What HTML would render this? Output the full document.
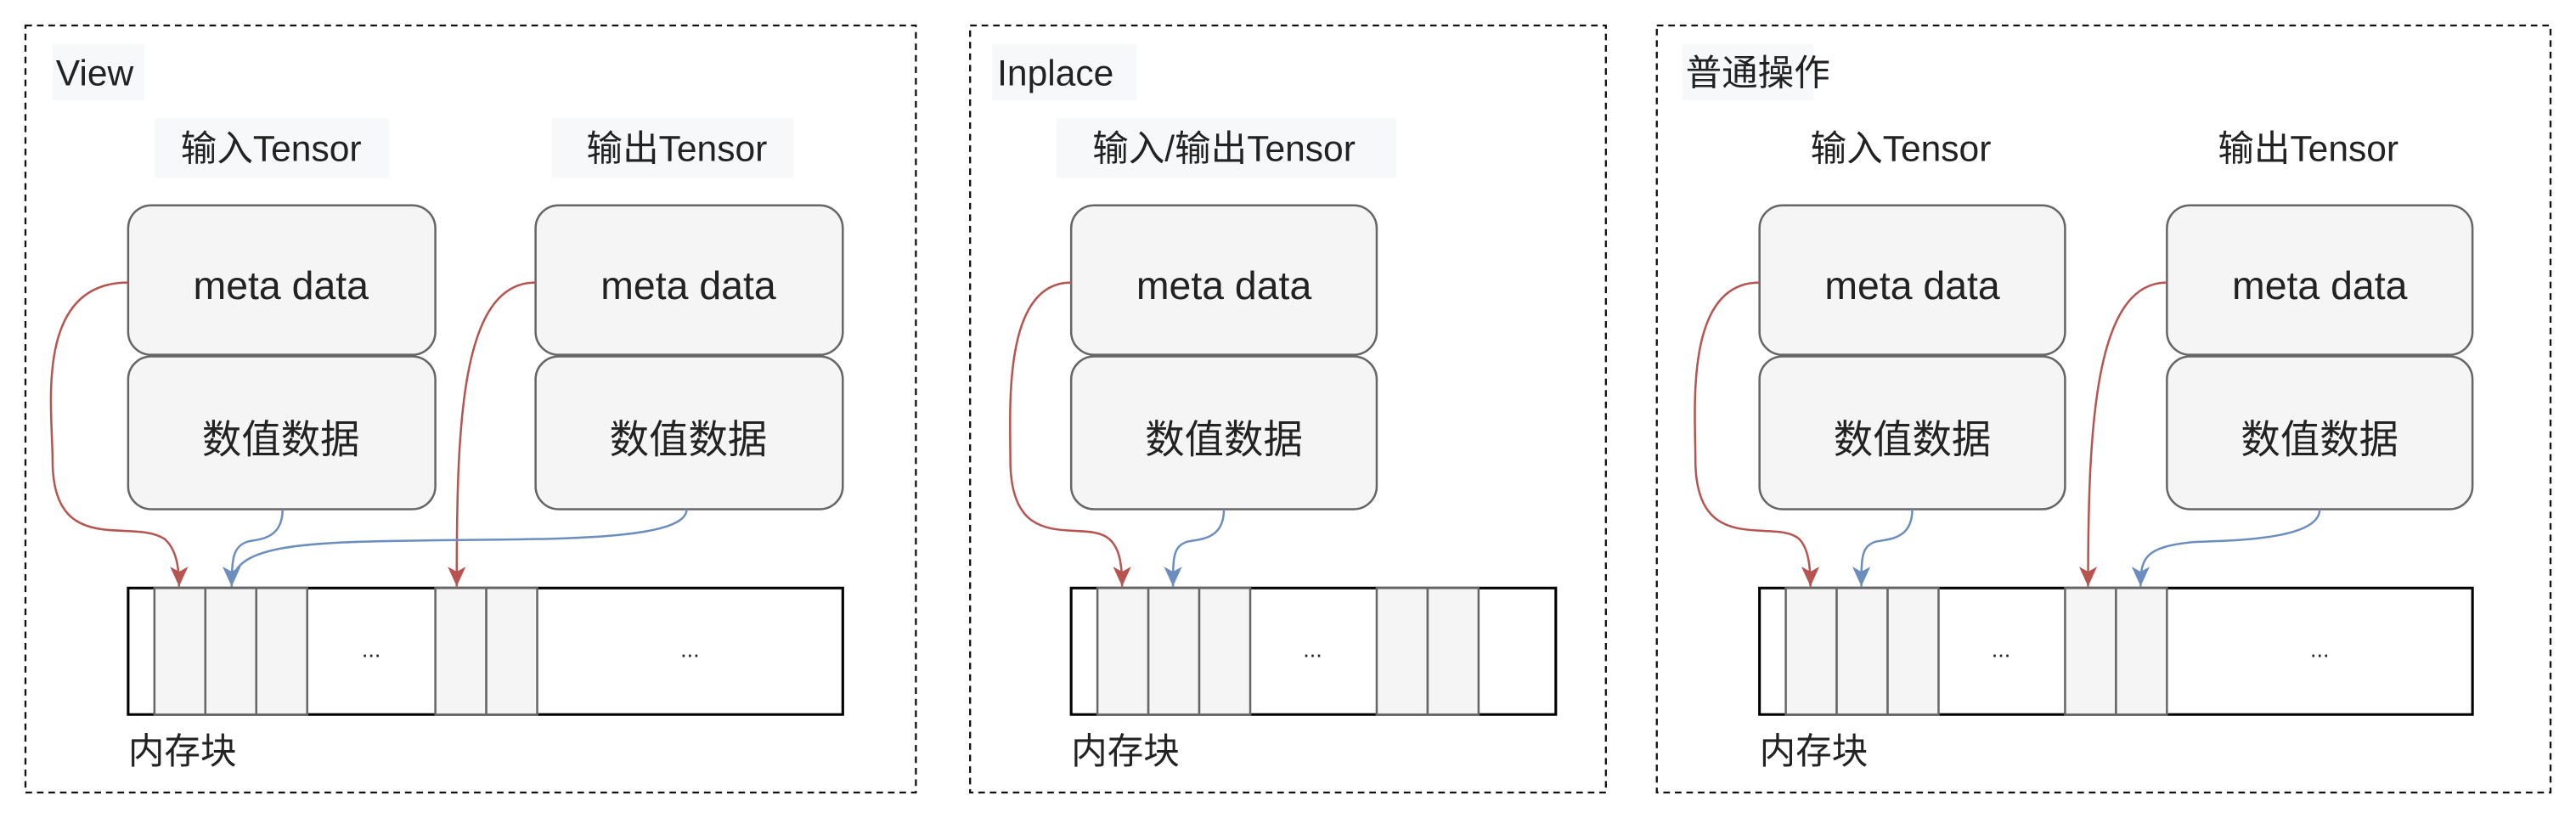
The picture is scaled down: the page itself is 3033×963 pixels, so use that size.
<!DOCTYPE html>
<html><head><meta charset="utf-8"><style>
html,body{margin:0;padding:0;background:#fff;}
svg{display:block;}
text{font-family:"Liberation Sans","Noto Sans CJK SC",sans-serif;fill:#222;}
</style></head><body>
<svg width="3033" height="963" viewBox="0 0 1568 498" preserveAspectRatio="none" xmlns="http://www.w3.org/2000/svg">
<defs>
<marker id="ar" markerWidth="13" markerHeight="11" refX="12" refY="5.5" orient="auto" markerUnits="userSpaceOnUse" viewBox="0 0 13 11"><path d="M0,0 L12,5.5 L0,11 L3,5.5 Z" fill="#b85450"/></marker>
<marker id="ab" markerWidth="13" markerHeight="11" refX="12" refY="5.5" orient="auto" markerUnits="userSpaceOnUse" viewBox="0 0 13 11"><path d="M0,0 L12,5.5 L0,11 L3,5.5 Z" fill="#6c8ebf"/></marker>
</defs>
<g fill="none" stroke="#111" stroke-width="1.2" stroke-dasharray="4,3">
<rect x="15.5" y="15.5" width="542" height="467"/>
<rect x="590.5" y="15.5" width="387" height="467"/>
<rect x="1008.5" y="15.5" width="544" height="467"/>
</g>
<g fill="#f7f8f9">
<rect x="32" y="27" width="56" height="34"/>
<rect x="94" y="72" width="143" height="36"/>
<rect x="336" y="72" width="147" height="36"/>
<rect x="604" y="27" width="88" height="34"/>
<rect x="643" y="72" width="207" height="36"/>
<rect x="1024" y="27" width="80" height="34"/>
</g>
<g font-size="22">
<text x="34" y="52">View</text>
<text x="607" y="52">Inplace</text>
<text x="1026" y="52">普通操作</text>
<text x="165" y="98" text-anchor="middle">输入Tensor</text>
<text x="412" y="98" text-anchor="middle">输出Tensor</text>
<text x="745" y="98" text-anchor="middle">输入/输出Tensor</text>
<text x="1157" y="98" text-anchor="middle">输入Tensor</text>
<text x="1405" y="98" text-anchor="middle">输出Tensor</text>
<text x="78" y="465">内存块</text>
<text x="652" y="465">内存块</text>
<text x="1071" y="465">内存块</text>
</g>
<g fill="#f5f5f5" stroke="#666" stroke-width="1.3">
<rect x="78" y="125" width="187" height="91" rx="14"/>
<rect x="78" y="217" width="187" height="93" rx="14"/>
<rect x="326" y="125" width="187" height="91" rx="14"/>
<rect x="326" y="217" width="187" height="93" rx="14"/>
<rect x="652" y="125" width="186" height="91" rx="14"/>
<rect x="652" y="217" width="186" height="93" rx="14"/>
<rect x="1071" y="125" width="186" height="91" rx="14"/>
<rect x="1071" y="217" width="186" height="93" rx="14"/>
<rect x="1319" y="125" width="186" height="91" rx="14"/>
<rect x="1319" y="217" width="186" height="93" rx="14"/>
</g>
<g font-size="24" text-anchor="middle">
<text x="171" y="182">meta data</text><text x="171" y="276">数值数据</text>
<text x="419" y="182">meta data</text><text x="419" y="276">数值数据</text>
<text x="745" y="182">meta data</text><text x="745" y="276">数值数据</text>
<text x="1164" y="182">meta data</text><text x="1164" y="276">数值数据</text>
<text x="1412" y="182">meta data</text><text x="1412" y="276">数值数据</text>
</g>
<g>
<rect x="78" y="358" width="435" height="77" fill="#fff" stroke="#000" stroke-width="1.6"/>
<g fill="#f5f5f5" stroke="#666" stroke-width="1.3">
<rect x="94" y="358" width="31" height="77"/><rect x="125" y="358" width="31" height="77"/><rect x="156" y="358" width="31" height="77"/>
<rect x="265" y="358" width="31" height="77"/><rect x="296" y="358" width="31" height="77"/>
</g>
<text x="226" y="400" font-size="14" text-anchor="middle">...</text>
<text x="420" y="400" font-size="14" text-anchor="middle">...</text>

<rect x="652" y="358" width="295" height="77" fill="#fff" stroke="#000" stroke-width="1.6"/>
<g fill="#f5f5f5" stroke="#666" stroke-width="1.3">
<rect x="668" y="358" width="31" height="77"/><rect x="699" y="358" width="31" height="77"/><rect x="730" y="358" width="31" height="77"/>
<rect x="838" y="358" width="31" height="77"/><rect x="869" y="358" width="31" height="77"/>
</g>
<text x="799" y="400" font-size="14" text-anchor="middle">...</text>

<rect x="1071" y="358" width="434" height="77" fill="#fff" stroke="#000" stroke-width="1.6"/>
<g fill="#f5f5f5" stroke="#666" stroke-width="1.3">
<rect x="1087" y="358" width="31" height="77"/><rect x="1118" y="358" width="31" height="77"/><rect x="1149" y="358" width="31" height="77"/>
<rect x="1257" y="358" width="31" height="77"/><rect x="1288" y="358" width="31" height="77"/>
</g>
<text x="1218" y="400" font-size="14" text-anchor="middle">...</text>
<text x="1412" y="400" font-size="14" text-anchor="middle">...</text>
</g>
<g fill="none" stroke-width="1.3">
<path d="M78,172 C20,172 32,250 32,280 C32,340 80,315 100,328 C106,333 109,342 109,357" stroke="#b85450" marker-end="url(#ar)"/>
<path d="M326,172 C280,172 278,260 278,357" stroke="#b85450" marker-end="url(#ar)"/>
<path d="M172,310 C172,330 155,328 150,330 C142,333 141,340 141,357" stroke="#6c8ebf" marker-end="url(#ab)"/>
<path d="M418,310 C418,330 330,328 260,329 C180,330 141,332 141,357" stroke="#6c8ebf" marker-end="url(#ab)"/>
<path d="M652,172 C610,172 615,250 615,280 C615,340 660,315 675,328 C681,333 683,342 683,357" stroke="#b85450" marker-end="url(#ar)"/>
<path d="M745,310 C745,330 728,328 722,330 C714,333 714,340 714,357" stroke="#6c8ebf" marker-end="url(#ab)"/>
<path d="M1071,172 C1025,172 1032,250 1032,280 C1032,340 1080,315 1095,328 C1100,333 1102,342 1102,357" stroke="#b85450" marker-end="url(#ar)"/>
<path d="M1164,310 C1164,330 1147,328 1141,330 C1133,333 1133,340 1133,357" stroke="#6c8ebf" marker-end="url(#ab)"/>
<path d="M1319,172 C1275,172 1271,260 1271,357" stroke="#b85450" marker-end="url(#ar)"/>
<path d="M1412,310 C1412,330 1350,329 1335,330 C1305,333 1303,340 1303,357" stroke="#6c8ebf" marker-end="url(#ab)"/>
</g>
</svg>
</body></html>
